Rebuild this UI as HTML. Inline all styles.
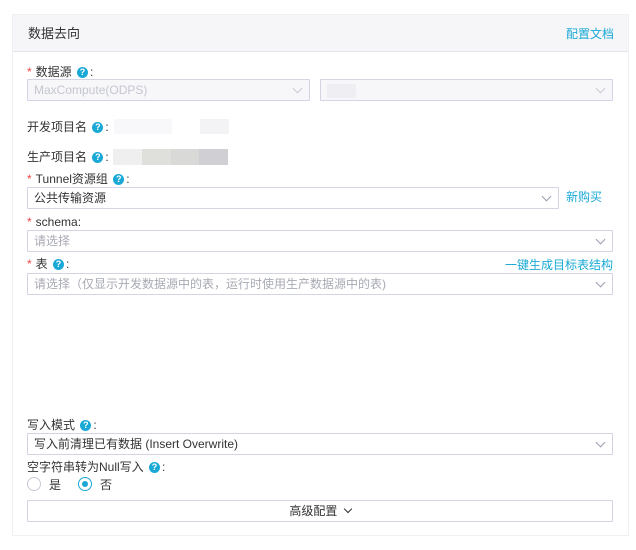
<!DOCTYPE html>
<html><head><meta charset="utf-8"><style>
*{box-sizing:border-box;margin:0;padding:0}
body{width:636px;height:550px;background:#fff;font-family:"Liberation Sans","Noto Sans CJK SC",sans-serif;font-size:12px;color:#333;position:relative;overflow:hidden}
.panel{position:absolute;left:12px;top:14px;width:617px;height:522px;border:1px solid #eef0f4;background:#fff}
.hdr{position:absolute;left:0;top:0;right:0;height:37px;background:#f6f6f8;border-bottom:1px solid #e3e4ec}
.hdr .t{position:absolute;left:15px;top:8px;font-size:13px;color:#333}
.link{color:#1aa9d6}
.hdr .l{position:absolute;right:14px;top:10px;font-size:12px}
.a{position:absolute;font-size:12px;line-height:14px;white-space:nowrap}
.req{color:#f04646;margin-right:4px}
.q{display:inline-block;width:11px;height:11px;border-radius:50%;background:#1aa9d6;color:#fff;font-size:9px;line-height:11px;text-align:center;font-weight:bold;vertical-align:0;margin:0 2px;position:relative;top:-1px}
.sel{position:absolute;height:22px;border:1px solid #d3d5e4;background:#fff;border-radius:1px;line-height:20px;padding-left:6px;font-size:12px}
.sel.dis{background:#f7f7f9;color:#c4c6d0}
.sel.ph{color:#a8aab4}
.sel::after{content:"";position:absolute;right:8px;top:5px;width:6px;height:6px;border-right:1.4px solid #9a9db0;border-bottom:1.4px solid #9a9db0;transform:rotate(45deg)}
.sel.dis::after{border-color:#c8cad6}
.sel.nochev::after{display:none}
.blur{position:absolute}
.radio{position:absolute;width:14px;height:14px;border:1px solid #c8cad6;border-radius:50%;background:#fff}
.radio.on{border-color:#1aa9d6}
.radio.on::after{content:"";position:absolute;left:3px;top:3px;width:6px;height:6px;border-radius:50%;background:#1aa9d6}
</style></head><body>
<div class="panel"><div class="hdr"><span class="t">数据去向</span><span class="l link">配置文档</span></div></div>

<div class="a" style="left:27px;top:65px"><span class="req">*</span>数据源 <span class="q">?</span>:</div>
<div class="sel dis" style="left:27px;top:79px;width:283px">MaxCompute(ODPS)</div>
<div class="sel dis" style="left:320px;top:79px;width:293px"><span style="display:inline-block;width:29px;height:14px;background:#efeff3;vertical-align:middle"></span></div>

<div class="a" style="left:27px;top:120px">开发项目名 <span class="q">?</span>:</div>
<div class="blur" style="left:114px;top:119px;width:58px;height:15px;background:#f8f8fa"></div>
<div class="blur" style="left:200px;top:119px;width:29px;height:15px;background:#f3f3f6"></div>

<div class="a" style="left:27px;top:150px">生产项目名 <span class="q">?</span>:</div>
<div class="blur" style="left:113px;top:149px;width:29px;height:16px;background:#efefef"></div>
<div class="blur" style="left:142px;top:149px;width:29px;height:16px;background:#dfdfdb"></div>
<div class="blur" style="left:171px;top:149px;width:28px;height:16px;background:#d9d9d7"></div>
<div class="blur" style="left:199px;top:149px;width:29px;height:16px;background:#d0cfd3"></div>

<div class="a" style="left:27px;top:172px"><span class="req">*</span>Tunnel资源组 <span class="q">?</span>:</div>
<div class="sel" style="left:27px;top:187px;width:532px">公共传输资源</div>
<div class="a link" style="left:566px;top:190px">新购买</div>

<div class="a" style="left:27px;top:215px"><span class="req">*</span>schema:</div>
<div class="sel ph" style="left:27px;top:230px;width:586px">请选择</div>

<div class="a" style="left:27px;top:257px"><span class="req">*</span>表 <span class="q">?</span>:</div>
<div class="a link" style="right:23px;top:258px">一键生成目标表结构</div>
<div class="sel ph" style="left:27px;top:273px;width:586px">请选择（仅显示开发数据源中的表，运行时使用生产数据源中的表)</div>

<div class="a" style="left:27px;top:418px">写入模式 <span class="q">?</span>:</div>
<div class="sel" style="left:27px;top:433px;width:586px">写入前清理已有数据 (Insert Overwrite)</div>

<div class="a" style="left:27px;top:460px">空字符串转为Null写入 <span class="q">?</span>:</div>
<div class="radio" style="left:27px;top:477px"></div><div class="a" style="left:49px;top:478px">是</div>
<div class="radio on" style="left:78px;top:477px"></div><div class="a" style="left:100px;top:478px">否</div>

<div class="sel nochev" style="left:27px;top:500px;width:586px;text-align:center;padding:0">高级配置 <span style="display:inline-block;width:6px;height:6px;border-right:1.6px solid #333;border-bottom:1.6px solid #333;transform:rotate(45deg);vertical-align:3px;margin-left:4px"></span></div>
</body></html>
